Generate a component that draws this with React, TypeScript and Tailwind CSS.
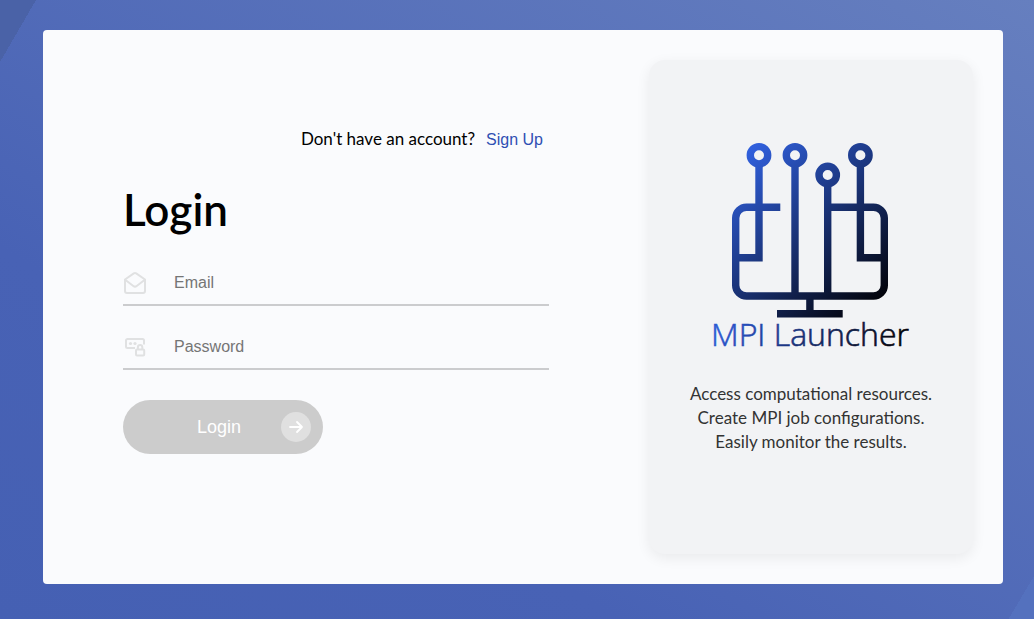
import React from "react";

function EnvelopeIcon() {
  return (
    <svg width="24" height="24" viewBox="0 0 24 24" fill="none" stroke="#e0e1e2" strokeWidth="2" strokeLinejoin="round" strokeLinecap="round" aria-hidden="true">
      <path d="M2 8.500 10.800 2.400a2.200 2.200 0 0 1 2.400 0L22 8.500V20a2 2 0 0 1-2 2H4a2 2 0 0 1-2-2z" />
      <path d="m2.500 9 7.800 6a2.800 2.800 0 0 0 3.400 0l7.800-6" />
    </svg>
  );
}

function PasswordIcon() {
  return (
    <svg width="24" height="24" viewBox="0 0 24 24" fill="none" stroke="#e0e1e2" strokeWidth="2" strokeLinejoin="round" aria-hidden="true">
      <path d="M12 13H4.500A1.500 1.500 0 0 1 3 11.500V5.500A1.500 1.500 0 0 1 4.500 4h15A1.500 1.500 0 0 1 21 5.500V9.500" />
      <rect x="13" y="14.500" width="8.200" height="6" rx="1" />
      <path d="M14.900 14.500v-2.300a2.200 2.200 0 0 1 4.400 0v2.300" />
      <circle cx="7.500" cy="8.500" r="1.600" fill="#e0e1e2" stroke="none" />
      <circle cx="12" cy="8.500" r="1.600" fill="#e0e1e2" stroke="none" />
    </svg>
  );
}

function Logo() {
  return (
    <svg width="222" height="230" viewBox="0 0 222 230" role="img" aria-label="MPI Launcher">
      <defs>
        <linearGradient id="mark" gradientUnits="userSpaceOnUse" x1="50" y1="20" x2="182" y2="166">
          <stop offset="0" stopColor="#305fdc" />
          <stop offset="1" stopColor="#03040c" />
        </linearGradient>
        <linearGradient id="word" gradientUnits="userSpaceOnUse" x1="24" y1="190" x2="174" y2="262">
          <stop offset="0" stopColor="#2a57d2" />
          <stop offset="1" stopColor="#03040c" />
        </linearGradient>
      </defs>
      <g fill="none" stroke="url(#mark)" strokeWidth="7.400">
        <circle cx="59" cy="25.300" r="8.700" />
        <circle cx="95" cy="25.300" r="8.700" />
        <circle cx="127.700" cy="45" r="8.700" />
        <circle cx="160.400" cy="25.300" r="8.700" />
        <path d="M59 34V127.800H36M95 34V166M127.700 54V166M160.400 34V127.800H184" />
        <path d="M80.300 77.200H46.500A10.800 10.800 0 0 0 35.700 88V155.200A10.800 10.800 0 0 0 46.500 166H173.500A10.800 10.800 0 0 0 184.300 155.200V88A10.800 10.800 0 0 0 173.500 77.200H128" />
        <path d="M109.900 166V183M77 183.700H142.700" />
      </g>
      <text x="110" y="216" textAnchor="middle" fill="url(#word)" stroke="url(#word)" strokeWidth="0.600" className="font-['Open_Sans',sans-serif] text-[32px] font-light">
        MPI Launcher
      </text>
    </svg>
  );
}

type FieldProps = { id: string; type: string; label: string; icon: React.ReactNode };

function Field({ id, type, label, icon }: FieldProps) {
  return (
    <div className="flex h-11 items-center border-b-2 border-[#cbccce]">
      <label htmlFor={id} aria-label={label} className="w-[51px] shrink-0">
        {icon}
      </label>
      <input
        id={id}
        type={type}
        placeholder={label}
        className="min-w-0 flex-1 bg-transparent font-['Liberation_Sans',Arial,sans-serif] text-base text-black outline-none placeholder:text-[#757575]"
      />
    </div>
  );
}

export default function App() {
  return (
    <div className="min-h-screen bg-[linear-gradient(to_bottom_right,#4a62a7_50%,transparent_50%),linear-gradient(to_top_left,#5471be_50%,transparent_50%),linear-gradient(to_top_right,#4560b3,#4862b5_30%,#667fbf)] bg-[length:36px_62px,26px_44px,auto] bg-[position:left_top,right_bottom,center] bg-no-repeat pt-[30px] pr-[31px] pb-9 pl-[43px] font-['Lato',sans-serif]">
      <main className="flex min-h-[554px] rounded bg-[#fafbfd] p-[30px]">
        <section className="flex flex-1 flex-col pt-[67px] pr-[100px] pl-[50px]">
          <p className="flex h-6 items-baseline justify-end gap-[11px] pr-1.5 text-[17px] leading-6 text-black">
            <span>Don't have an account?</span>
            <a href="#signup" className="font-['Liberation_Sans',Arial,sans-serif] text-base leading-6 text-[#2f4fb3]">
              Sign Up
            </a>
          </p>
          <h1 className="mt-[30px] text-[44px] leading-[56px] font-semibold text-black">Login</h1>
          <form className="mt-[25px] flex flex-col gap-5">
            <Field id="email" type="email" label="Email" icon={<EnvelopeIcon />} />
            <Field id="password" type="password" label="Password" icon={<PasswordIcon />} />
            <button
              type="button"
              className="mt-2.5 flex h-[54px] w-[200px] items-center justify-end gap-10 rounded-full bg-[#cccccc] pr-3 font-['Liberation_Sans',Arial,sans-serif] text-lg text-white"
            >
              Login
              <span className="flex size-[30px] items-center justify-center rounded-full bg-[#e0e0e0]">
                <svg width="16" height="16" viewBox="0 0 16 16" fill="none" stroke="white" strokeWidth="1.800" strokeLinecap="round" strokeLinejoin="round" aria-hidden="true">
                  <path d="M2 8h12M9 3l5 5-5 5" />
                </svg>
              </span>
            </button>
          </form>
        </section>
        <aside className="flex w-[324px] shrink-0 flex-col items-center rounded-2xl bg-[#f2f3f5] pt-[70px] shadow-[0_4px_14px_rgba(0,0,0,0.07)]">
          <Logo />
          <p className="mt-[22px] text-center text-[17px] leading-6 text-[#333333]">
            Access computational resources.
            <br />
            Create MPI job configurations.
            <br />
            Easily monitor the results.
          </p>
        </aside>
      </main>
    </div>
  );
}
